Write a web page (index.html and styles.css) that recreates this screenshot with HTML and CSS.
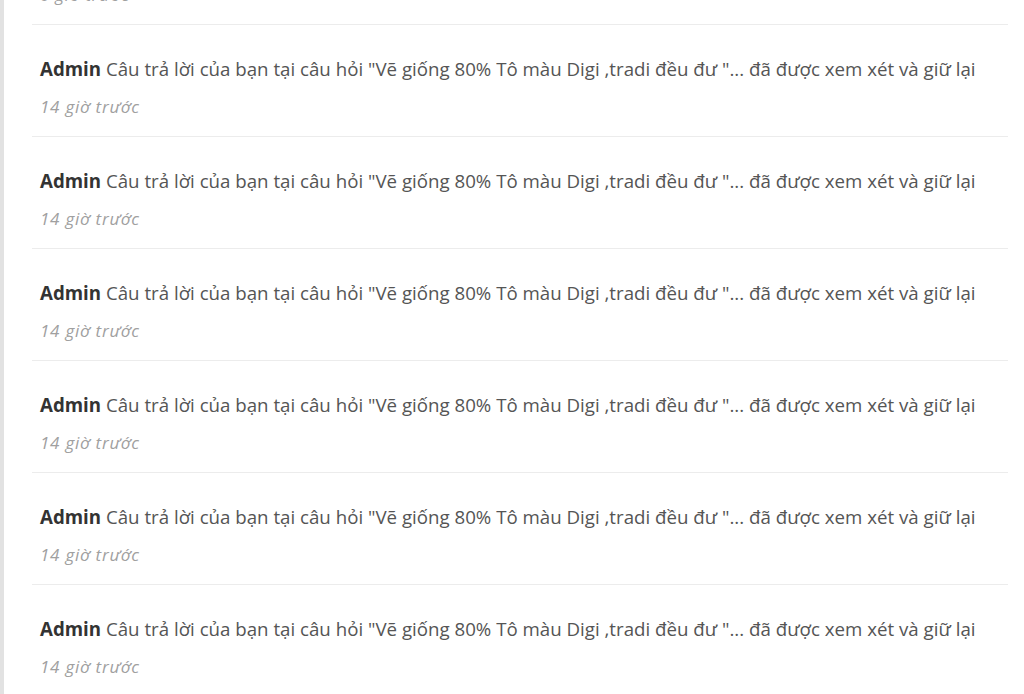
FILE: index.html
```html
<!DOCTYPE html>
<html lang="vi">
<head>
    <meta charset="UTF-8">
    <meta name="viewport" content="width=device-width, initial-scale=1.0">
    <title>Thông báo</title>
    <link rel="stylesheet" href="styles.css">
</head>
<body>
    <div class="page">
        <ul class="notify-list">
            <li class="notify-item">
                <p class="notify-text"><b>Admin</b> Câu trả lời của bạn tại câu hỏi "Vẽ giống 80% Tô màu Digi ,tradi đều đư "... đã được xem xét và giữ lại</p>
                <p class="notify-time">6 giờ trước</p>
            </li>
            <li class="notify-item">
                <p class="notify-text"><b>Admin</b> Câu trả lời của bạn tại câu hỏi "Vẽ giống 80% Tô màu Digi ,tradi đều đư "... đã được xem xét và giữ lại</p>
                <p class="notify-time">14 giờ trước</p>
            </li>
            <li class="notify-item">
                <p class="notify-text"><b>Admin</b> Câu trả lời của bạn tại câu hỏi "Vẽ giống 80% Tô màu Digi ,tradi đều đư "... đã được xem xét và giữ lại</p>
                <p class="notify-time">14 giờ trước</p>
            </li>
            <li class="notify-item">
                <p class="notify-text"><b>Admin</b> Câu trả lời của bạn tại câu hỏi "Vẽ giống 80% Tô màu Digi ,tradi đều đư "... đã được xem xét và giữ lại</p>
                <p class="notify-time">14 giờ trước</p>
            </li>
            <li class="notify-item">
                <p class="notify-text"><b>Admin</b> Câu trả lời của bạn tại câu hỏi "Vẽ giống 80% Tô màu Digi ,tradi đều đư "... đã được xem xét và giữ lại</p>
                <p class="notify-time">14 giờ trước</p>
            </li>
            <li class="notify-item">
                <p class="notify-text"><b>Admin</b> Câu trả lời của bạn tại câu hỏi "Vẽ giống 80% Tô màu Digi ,tradi đều đư "... đã được xem xét và giữ lại</p>
                <p class="notify-time">14 giờ trước</p>
            </li>
            <li class="notify-item">
                <p class="notify-text"><b>Admin</b> Câu trả lời của bạn tại câu hỏi "Vẽ giống 80% Tô màu Digi ,tradi đều đư "... đã được xem xét và giữ lại</p>
                <p class="notify-time">14 giờ trước</p>
            </li>
        </ul>
    </div>
</body>
</html>
```

FILE: styles.css
```css
body {
    font-family: "Open Sans", "Noto Sans", sans-serif;
    margin: 0;
    padding: 0;
    background-color: #fff;
    overflow: hidden;
}

.page {
    display: flow-root;
    border-left: 4px solid #e2e2e2;
    padding: 0 16px 0 28px;
    height: 694px;
    box-sizing: border-box;
    overflow: hidden;
}

.notify-list {
    list-style-type: none;
    margin: -88px 0 0;
    padding: 0;
}

.notify-item {
    border-top: 1px solid #ececec;
    padding: 30px 8px 17px;
}

.notify-item:first-child {
    border-top: none;
    padding-top: 31px;
}

.notify-text {
    margin: 0;
    font-size: 18.7px;
    line-height: 28px;
    color: #555;
    white-space: nowrap;
}

.notify-text b {
    color: #333;
    font-weight: 700;
}

.notify-time {
    margin: 12px 0 0;
    font-size: 17px;
    line-height: 24px;
    font-style: italic;
    letter-spacing: 0.75px;
    color: #a0a0a0;
}
```
